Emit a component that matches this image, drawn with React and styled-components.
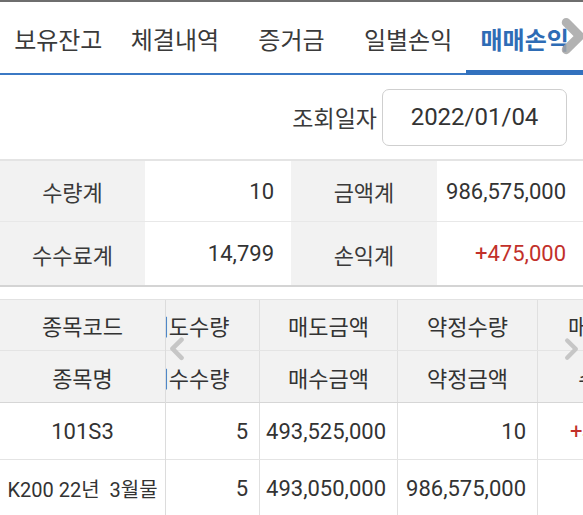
import styled, { createGlobalStyle, css } from "styled-components";

const GlobalStyle = createGlobalStyle`
  html, body {
    margin: 0;
    padding: 0;
    background: #fff;
  }
  body {
    font-family: Roboto, "Noto Sans CJK KR", sans-serif;
    color: #333;
  }
`;

const Page = styled.div`
  width: 583px;
  height: 515px;
  overflow: hidden;
  border-top: 2px solid #6e6e6e;
  box-sizing: border-box;
`;

const TabBar = styled.nav`
  position: relative;
  display: grid;
  grid-template-columns: repeat(5, 1fr);
  height: 71px;
  border-bottom: 2px solid #3b79c4;
`;

const Tab = styled.div`
  position: relative;
  display: flex;
  align-items: center;
  justify-content: center;
  padding-top: 2px;
  font-size: 24px;
  color: #3a3a3a;
  white-space: nowrap;

  ${({ $active }) =>
    $active &&
    css`
      color: #2e6cb5;
      font-weight: 700;
      &::after {
        content: "";
        position: absolute;
        left: 0;
        right: 0;
        bottom: -2px;
        height: 5px;
        background: #3271be;
      }
    `}
`;

const Chevron = styled.svg`
  position: absolute;
  pointer-events: none;
  ${({ $top, $left, $right }) => css`
    top: ${$top}px;
    ${$left !== undefined ? `left: ${$left}px;` : ""}
    ${$right !== undefined ? `right: ${$right}px;` : ""}
  `}
`;

const DateRow = styled.div`
  display: flex;
  align-items: center;
  justify-content: flex-end;
  gap: 5px;
  height: 84px;
  padding-right: 16px;
  box-sizing: border-box;
`;

const DateLabel = styled.span`
  font-size: 23px;
  color: #3a3a3a;
`;

const DateBox = styled.div`
  display: flex;
  align-items: center;
  justify-content: center;
  width: 185px;
  height: 57px;
  box-sizing: border-box;
  border: 1px solid #cfcfcf;
  border-radius: 7px;
  font-size: 24px;
  color: #333;
`;

const Summary = styled.div`
  display: grid;
  grid-template-columns: 145px 146px 146px 146px;
  grid-template-rows: 61px 63px;
  border-top: 2px solid #e4e4e4;
  border-bottom: 2px solid #d4d4d4;
`;

const SumCell = styled.div`
  display: flex;
  align-items: center;
  font-size: 22px;
  box-sizing: border-box;
  ${({ $row }) => $row === 0 && "border-bottom: 1px solid #e8e8e8;"}
  ${({ $label }) =>
    $label
      ? css`
          justify-content: center;
          background: #f2f2f2;
          color: #3a3a3a;
        `
      : css`
          justify-content: flex-end;
          padding-right: 17px;
          background: #fff;
        `}
  color: ${({ $red }) => ($red ? "#c2302a" : undefined)};
`;

const TableWrap = styled.div`
  position: relative;
  display: flex;
  margin-top: 12px;
  border-top: 1px solid #e2e2e2;
`;

const FixedCol = styled.div`
  flex: 0 0 166px;
  border-right: 1px solid #dcdcdc;
  box-sizing: border-box;
`;

const Scroller = styled.div`
  flex: 1;
  overflow: hidden;
`;

const ScrollInner = styled.div`
  margin-left: -47px;
  width: max-content;
`;

const Row = styled.div`
  display: grid;
  grid-template-columns: ${({ $cols }) => $cols};
  height: ${({ $h }) => $h}px;
  box-sizing: border-box;
  border-bottom: 1px solid ${({ $strong }) => ($strong ? "#d6d6d6" : "#e4e4e4")};
  background: ${({ $head }) => ($head ? "#f2f2f2" : "#fff")};
`;

const Cell = styled.div`
  display: flex;
  align-items: center;
  justify-content: ${({ $align }) => ($align === "right" ? "flex-end" : "center")};
  padding-right: ${({ $align }) => ($align === "right" ? "11px" : "0")};
  padding-left: ${({ $indent }) => ($indent ? `${$indent}px` : "0")};
  font-size: ${({ $small }) => ($small ? "20px" : "22px")};
  color: ${({ $red }) => ($red ? "#c2302a" : "#333")};
  white-space: pre;
  overflow: hidden;
  box-sizing: border-box;
  & + & {
    border-left: 1px solid #e0e0e0;
  }
`;

const SCROLL_COLS = "140px 138px 140px 142px";

const rows = [
  { h: 51, head: true, fixed: "종목코드", cells: ["매도수량", "매도금액", "약정수량", "매도손익"] },
  { h: 52, head: true, strong: true, fixed: "종목명", cells: ["매수수량", "매수금액", "약정금액", "수수료"] },
  { h: 57, fixed: "101S3", cells: ["5", "493,525,000", "10", "+460,201"], red: 3 },
  { h: 57, fixed: "K200 22년  3월물", small: true, cells: ["5", "493,050,000", "986,575,000", ""] },
];

const tabs = ["보유잔고", "체결내역", "증거금", "일별손익", "매매손익"];

const summary = [
  ["수량계", "10", "금액계", "986,575,000"],
  ["수수료계", "14,799", "손익계", "+475,000"],
];

function ChevronIcon({ dir, size, stroke, color, ...rest }) {
  const d = dir === "left" ? "M16 4 L6 14 L16 24" : "M6 4 L16 14 L6 24";
  return (
    <Chevron viewBox="0 0 22 28" width={size} height={(size * 28) / 22} {...rest}>
      <path d={d} fill="none" stroke={color} strokeWidth={stroke} strokeLinecap="round" strokeLinejoin="round" />
    </Chevron>
  );
}

export default function App() {
  return (
    <>
      <GlobalStyle />
      <Page>
        <TabBar>
          {tabs.map((t, i) => (
            <Tab key={t} $active={i === tabs.length - 1}>{t}</Tab>
          ))}
          <ChevronIcon dir="right" size={30} stroke={6.5} color="rgba(165,165,165,0.85)" $top={15} $right={-5} />
        </TabBar>

        <DateRow>
          <DateLabel>조회일자</DateLabel>
          <DateBox>2022/01/04</DateBox>
        </DateRow>

        <Summary>
          {summary.map((r, ri) =>
            r.map((v, ci) => (
              <SumCell key={`${ri}-${ci}`} $row={ri} $label={ci % 2 === 0} $red={v.startsWith("+")}>
                {v}
              </SumCell>
            ))
          )}
        </Summary>

        <TableWrap>
          <FixedCol>
            {rows.map((r, i) => (
              <Row key={i} $cols="1fr" $h={r.h} $head={r.head} $strong={r.strong}>
                <Cell $small={r.small}>{r.fixed}</Cell>
              </Row>
            ))}
          </FixedCol>
          <Scroller>
            <ScrollInner>
              {rows.map((r, i) => (
                <Row key={i} $cols={SCROLL_COLS} $h={r.h} $head={r.head} $strong={r.strong}>
                  {r.cells.map((c, ci) => (
                    <Cell
                      key={ci}
                      $align={r.head || ci === 3 ? "center" : "right"}
                      $indent={!r.head && ci === 3 ? 14 : 0}
                      $red={r.red === ci}
                    >
                      {c}
                    </Cell>
                  ))}
                </Row>
              ))}
            </ScrollInner>
          </Scroller>
          <ChevronIcon dir="left" size={20} stroke={5} color="#c6c6c6" $top={36} $left={167} />
          <ChevronIcon dir="right" size={19} stroke={5} color="#c6c6c6" $top={37} $right={2} />
        </TableWrap>
      </Page>
    </>
  );
}
